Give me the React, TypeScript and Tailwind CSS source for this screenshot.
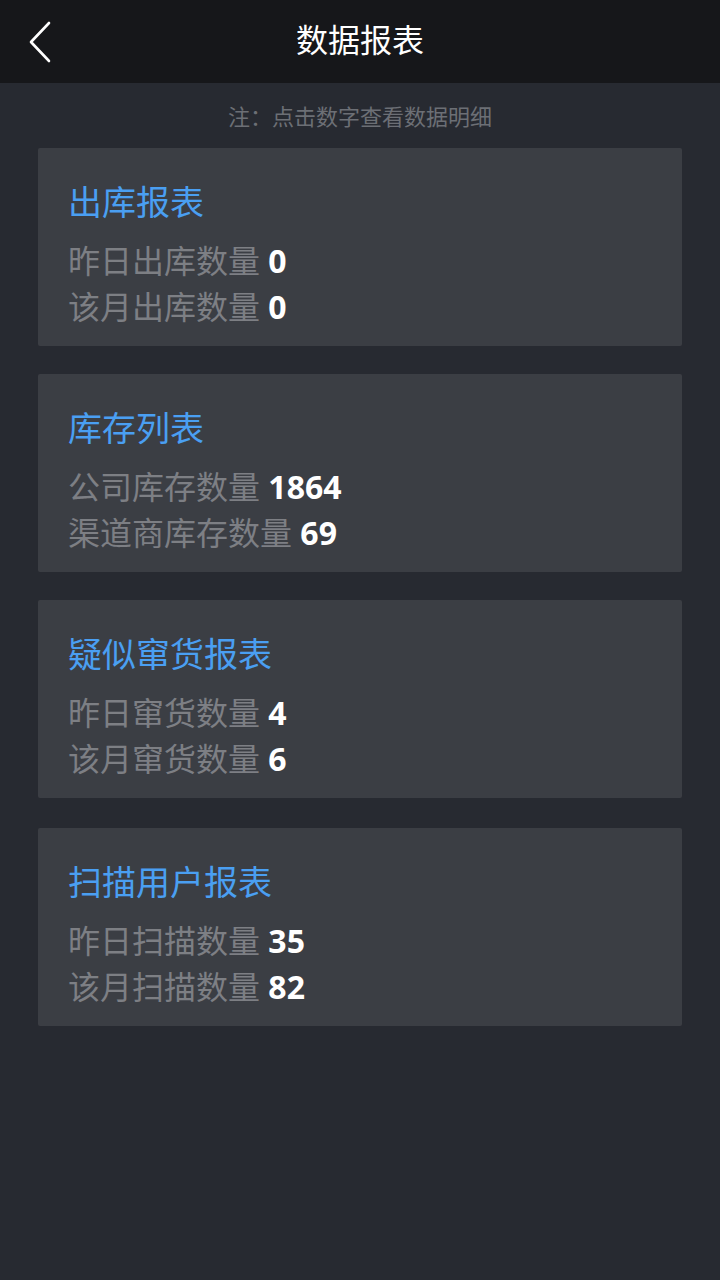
import React from "react";

const cards = [
  { title: "出库报表", rows: [["昨日出库数量", "0"], ["该月出库数量", "0"]] },
  { title: "库存列表", rows: [["公司库存数量", "1864"], ["渠道商库存数量", "69"]] },
  { title: "疑似窜货报表", rows: [["昨日窜货数量", "4"], ["该月窜货数量", "6"]] },
  { title: "扫描用户报表", rows: [["昨日扫描数量", "35"], ["该月扫描数量", "82"]] },
];

export default function App() {
  return (
    <div
      className="w-[720px] h-[1280px] bg-[#272a31] flex flex-col"
      style={{ fontFamily: '"Noto Sans", "Noto Sans CJK SC", sans-serif' }}
    >
      <div className="h-[83px] bg-[#16171a] flex items-center relative shrink-0">
        <svg className="absolute left-[28px] top-[21px]" width="24" height="42" viewBox="0 0 24 42">
          <path d="M21 2 L3 21 L21 40" fill="none" stroke="#ffffff" strokeWidth="2.6" strokeLinecap="round" strokeLinejoin="round" />
        </svg>
        <div className="w-full text-center text-white text-[32px] leading-[40px] -mt-[3px]">数据报表</div>
      </div>
      <div className="text-center text-[#6c6f75] text-[22px] leading-[30px] mt-[18px]">注：点击数字查看数据明细</div>
      <div className="flex flex-col gap-[28px] px-[38px] mt-[17px]">
        {cards.map((c, i) => (
          <div
            key={c.title}
            className={`bg-[#3b3e44] rounded-[2px] pt-[32px] pb-[16px] pl-[30px] h-[198px] ${i === 3 ? "mt-[2px]" : ""}`}
          >
            <div className="text-[#4a9ff2] text-[34px] leading-[44px]">{c.title}</div>
            <div className="mt-[14px]">
              {c.rows.map(([label, value]) => (
                <div key={label} className="text-[32px] leading-[46px] text-[#7d7f84]">
                  {label} <span className="text-white font-bold">{value}</span>
                </div>
              ))}
            </div>
          </div>
        ))}
      </div>
    </div>
  );
}
